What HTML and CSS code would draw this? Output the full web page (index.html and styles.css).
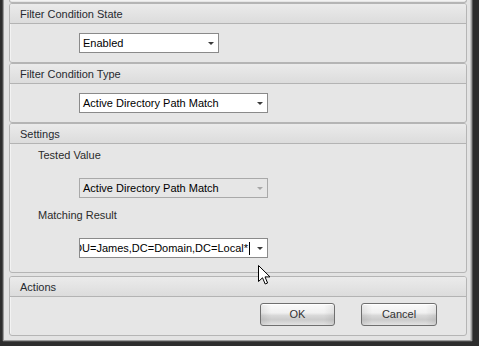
FILE: index.html
```html
<!DOCTYPE html>
<html lang="en">
<head>
  <meta charset="UTF-8">
  <title>Filter Condition</title>
  <link rel="stylesheet" href="styles.css">
</head>
<body>
  <div class="window">
    <!-- bottom of the group above, scrolled out of view -->
    <div class="group group-cut"></div>

    <section class="group">
      <div class="group-head">Filter Condition State</div>
      <div class="group-body">
        <div class="combo combo-short"><span class="combo-value">Enabled</span><span class="combo-arrow"></span></div>
      </div>
    </section>

    <section class="group">
      <div class="group-head">Filter Condition Type</div>
      <div class="group-body">
        <div class="combo"><span class="combo-value">Active Directory Path Match</span><span class="combo-arrow"></span></div>
      </div>
    </section>

    <section class="group">
      <div class="group-head">Settings</div>
      <div class="group-body settings">
        <div class="field-label">Tested Value</div>
        <div class="combo disabled"><span class="combo-value">Active Directory Path Match</span><span class="combo-arrow"></span></div>
        <div class="field-label">Matching Result</div>
        <div class="combo editing">
          <span class="combo-value"><span class="combo-text">OU=James,DC=Domain,DC=Local*</span><span class="caret"></span></span>
          <span class="combo-arrow"></span>
        </div>
      </div>
    </section>

    <section class="group actions">
      <div class="group-head">Actions</div>
      <div class="group-body buttons">
        <button class="btn btn-ok">OK</button>
        <button class="btn btn-cancel">Cancel</button>
      </div>
    </section>
  </div>

  <svg class="cursor" width="13" height="21" viewBox="0 0 13 21">
    <path d="M0.5 0.5 L0.5 16.5 L4.5 12.8 L7.2 19 L9.6 18 L7 11.9 L12 11.9 Z" fill="#fff" stroke="#000" stroke-width="1" stroke-linejoin="miter"/>
  </svg>
</body>
</html>
```

FILE: styles.css
```css
/* Base */
* { box-sizing: border-box; }
body { margin: 0; background: #2d2d2d; font: 11px "Liberation Sans", Arial, sans-serif; color: #222; position: relative; height: 346px; overflow: hidden; }

/* Window frame */
.window { margin-left: 3px; width: 469px; height: 341px; background: #e3e3e3; border: 1px solid #9a9a9a; border-top: 0; padding: 0 4px 4px 5px; box-shadow: inset -1px 0 #c4c4c4, 1px 0 #555, -1px 0 #4a4a4a, 0 1px #4a4a4a; display: flex; flex-direction: column; }

/* Group boxes */
.group { background: #e6e6e6; border: 1px solid #b5b5b5; border-radius: 3px; box-shadow: inset 1px 1px #f3f3f3; }
.group-cut { height: 3px; border-top: 0; border-radius: 0 0 3px 3px; }
.group.actions { margin-top: 3px; }
.group-head { height: 20px; padding: 1px 0 0 10px; line-height: 18px; color: #262a30; background: linear-gradient(#ebebeb, #dcdcdc); border-bottom: 1px solid #b3b3b3; border-radius: 2px 2px 0 0; }
.group-body { padding: 9px 0 9px 69px; }

/* Combo boxes */
.combo { display: flex; align-items: center; width: 189px; height: 20px; background: #fff; border: 1px solid #8a8a8a; }
.combo-short { width: 140px; }
.combo-value { flex: 1; padding-left: 3px; line-height: 18px; color: #000; white-space: nowrap; overflow: hidden; }
.combo-arrow { width: 15px; height: 18px; display: flex; align-items: center; justify-content: center; }
.combo-arrow::after { content: ""; border-left: 3px solid transparent; border-right: 3px solid transparent; border-top: 3px solid #3a3a3a; margin-top: 1px; }
.combo.disabled { background: #e6e6e6; border-color: #a9a9a9; }
.combo.disabled .combo-arrow::after { border-top-color: #a8a8a8; }
.combo.editing .combo-value { display: flex; justify-content: flex-end; align-items: center; padding: 0 2px 0 0; }
.combo-text { flex-shrink: 0; }
.caret { flex-shrink: 0; width: 1px; height: 13px; margin-left: 1px; background: #000; }

/* Settings block */
.settings { padding: 4px 0 14px 0; }
.settings .combo { margin: 16px 0 0 69px; }
.field-label { margin: 0 0 0 28px; line-height: 14px; color: #2b2b2b; }
.settings .field-label + .combo + .field-label { margin-top: 10px; }

/* Buttons */
.buttons { display: flex; justify-content: flex-end; gap: 26px; padding: 6px 29px 9px 0; }
.btn { height: 23px; padding: 0; font: inherit; color: #333; line-height: 21px; border: 1px solid #6f6f6f; border-radius: 3px; background: linear-gradient(to right, rgba(0,0,0,.07), rgba(0,0,0,0) 14%, rgba(0,0,0,0) 86%, rgba(0,0,0,.07)), linear-gradient(#fbfbfb, #f0f0f0 42%, #d8d8d8 55%, #cbcbcb 75%, #e3e3e3); box-shadow: inset 0 1px #fff; }
.btn-ok { width: 75px; }
.btn-cancel { width: 76px; }

/* Mouse pointer over the form */
.cursor { position: absolute; left: 258px; top: 265px; }
```
